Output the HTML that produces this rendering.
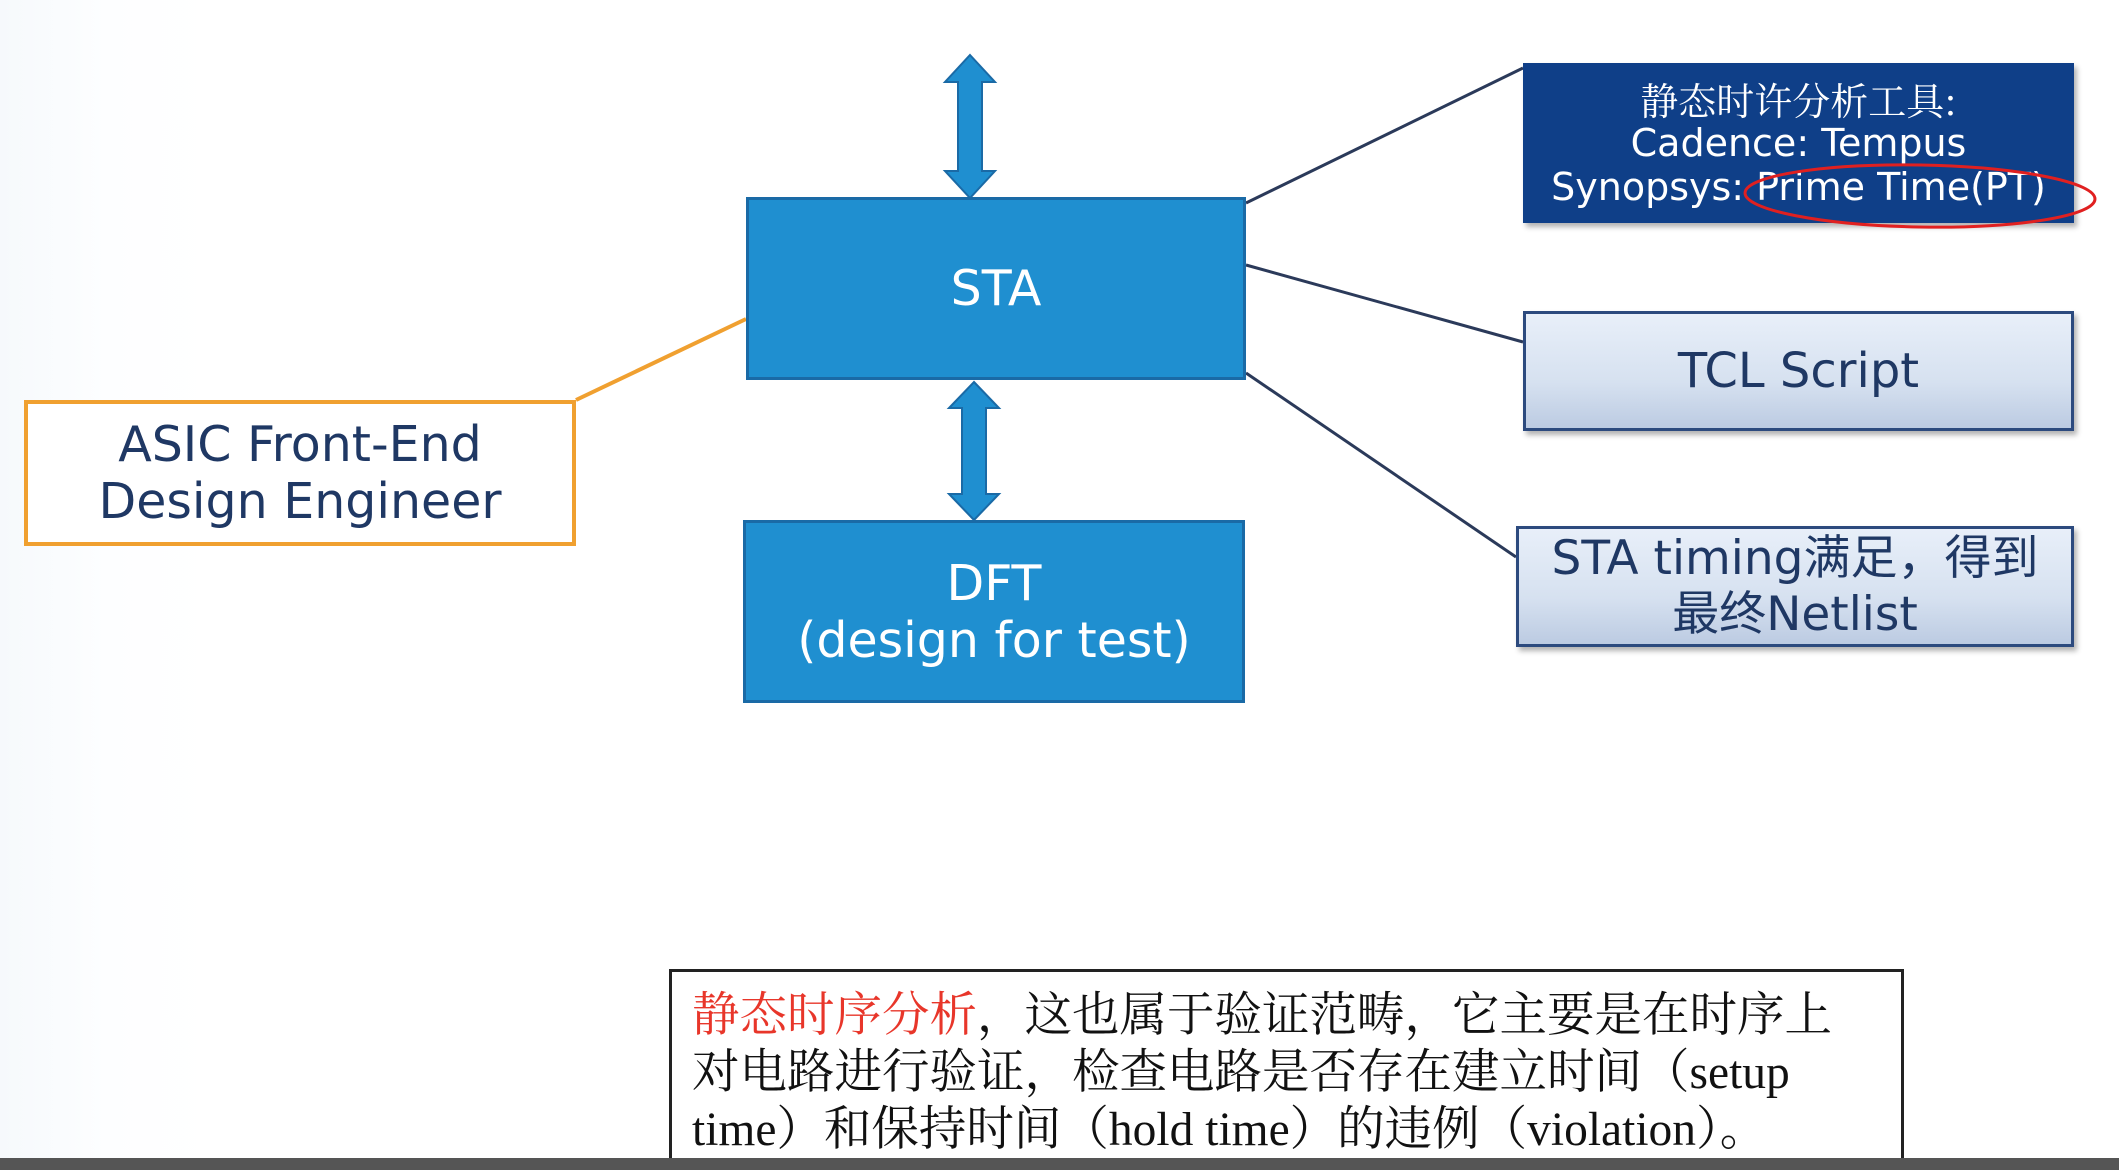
<!DOCTYPE html>
<html><head><meta charset="utf-8"><style>
html,body{margin:0;padding:0}
body{width:2119px;height:1170px;position:relative;overflow:hidden;background:linear-gradient(90deg,#f6f9fc 0%,#fdfeff 5%,#fff 10%);font-family:"DejaVu Sans","Liberation Sans","Noto Sans CJK SC",sans-serif}
.box{position:absolute;box-sizing:border-box;display:flex;flex-direction:column;align-items:center;justify-content:center;text-align:center;white-space:nowrap}
.blue{background:#1f8fd0;border:3px solid #1a6aa6;color:#fff;font-size:49px;line-height:57px}
.light{background:linear-gradient(180deg,#e8eff9 0%,#d6e1f0 60%,#bccbe2 100%);border:3px solid #2c4a7e;color:#1f3864;box-shadow:3px 4px 5px rgba(0,0,0,.3)}
</style></head><body>
<svg width="2119" height="1170" style="position:absolute;left:0;top:0">
<g stroke="#2b3a5a" stroke-width="3" fill="none">
<line x1="1246" y1="203" x2="1523" y2="68"/>
<line x1="1246" y1="265" x2="1523" y2="342"/>
<line x1="1246" y1="373" x2="1516" y2="557"/>
</g>
<line x1="576" y1="400" x2="746" y2="319" stroke="#f0a030" stroke-width="4"/>
<g fill="#1f8fd0" stroke="#1a6aa6" stroke-width="2">
<path d="M970 55 L995 82 L982 82 L982 171 L995 171 L970 198 L945 171 L958 171 L958 82 L945 82 Z"/>
<path d="M974 382 L999 408 L986 408 L986 494 L999 494 L974 520 L949 494 L962 494 L962 408 L949 408 Z"/>
</g>
</svg>
<div class="box blue" style="left:746px;top:197px;width:500px;height:183px">STA</div>
<div class="box blue" style="left:743px;top:520px;width:502px;height:183px">DFT<br>(design for test)</div>
<div class="box" style="left:24px;top:400px;width:552px;height:146px;border:4px solid #f0a030;background:#fff;color:#1f3864;font-size:49px;line-height:57px">ASIC Front-End<br>Design Engineer</div>
<div class="box" style="left:1523px;top:63px;width:551px;height:160px;background:#0f3f88;color:#fff;font-size:38px;line-height:44px;box-shadow:3px 4px 5px rgba(0,0,0,.3)"><div style="font-family:'Noto Serif CJK SC',serif">静态时许分析工具:</div><div>Cadence: Tempus</div><div>Synopsys: Prime Time(PT)</div></div>
<div class="box light" style="left:1523px;top:311px;width:551px;height:120px;font-size:48px">TCL Script</div>
<div class="box light" style="left:1516px;top:526px;width:558px;height:121px;font-size:47px;line-height:56px">STA timing满足，得到<br>最终Netlist</div>
<svg width="2119" height="1170" style="position:absolute;left:0;top:0">
<ellipse cx="1920" cy="196" rx="175" ry="31" fill="none" stroke="#e02020" stroke-width="3" transform="rotate(1 1920 196)"/>
</svg>
<div style="position:absolute;left:669px;top:969px;width:1235px;height:200px;box-sizing:border-box;border:3px solid #222;border-bottom:none;background:#fff;font-family:'Liberation Serif','Noto Serif CJK SC',serif;font-size:47.5px;line-height:57px;color:#111;padding:16px 0 0 20px;white-space:nowrap"><span style="color:#e8362a">静态时序分析</span>，这也属于验证范畴，它主要是在时序上<br>对电路进行验证，检查电路是否存在建立时间（setup<br>time）和保持时间（hold time）的违例（violation）。</div>
<div style="position:absolute;left:0;top:1158px;width:2119px;height:12px;background:#555"></div>
</body></html>
